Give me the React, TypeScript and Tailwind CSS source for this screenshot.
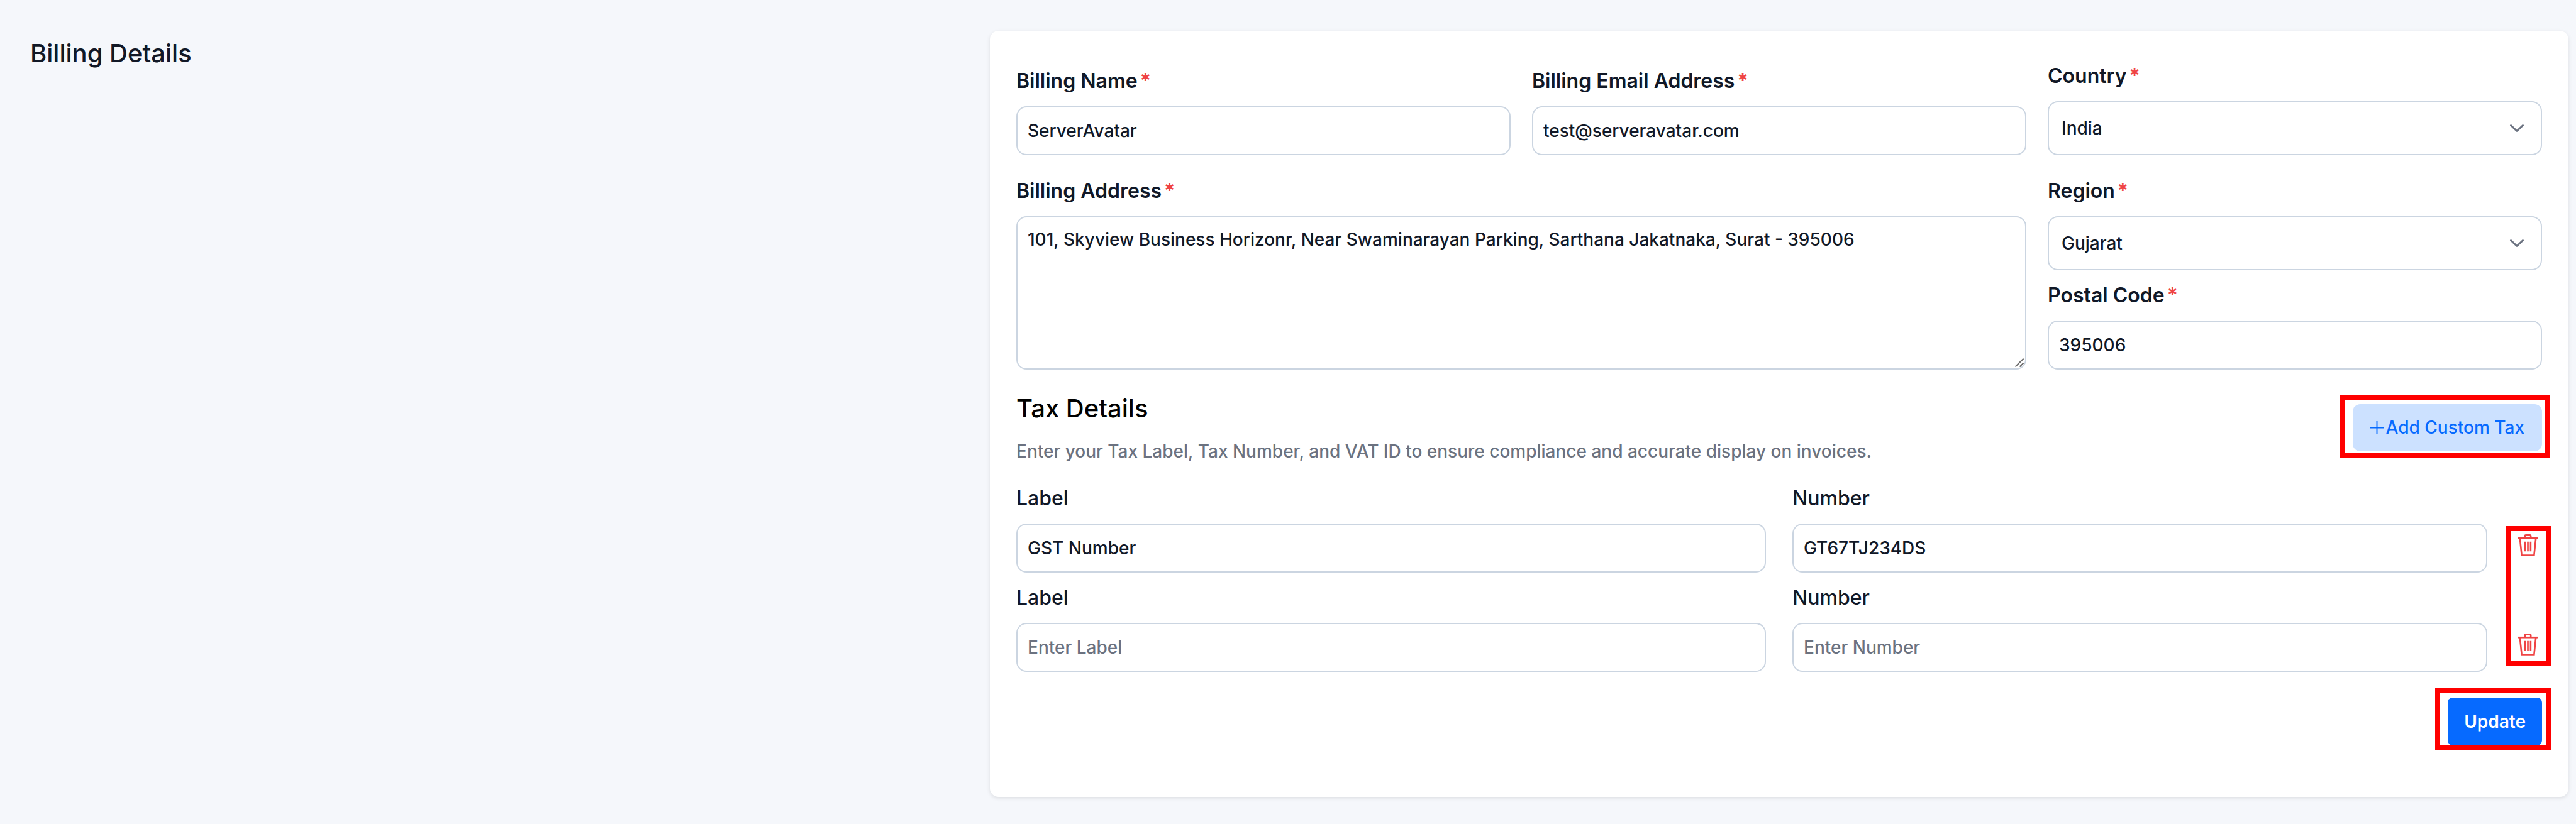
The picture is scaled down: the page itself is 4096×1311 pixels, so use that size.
import React, { useState } from 'react';

interface TaxRow {
  id: number;
  label: string;
  number: string;
}

const fieldClass =
  'block w-full rounded-[16px] border-2 border-[#cbd5e1] bg-white px-4 text-[28px] leading-[42px] font-medium text-[#111827] placeholder:text-[#6b7280] placeholder:opacity-100 focus:outline-none';

const TrashIcon: React.FC = () => (
  <svg viewBox="0 0 33 37" className="h-[35px] w-[31px]" fill="none" stroke="currentColor" strokeWidth="2.8">
    <path d="M0 6.5h33" />
    <path d="M11.5 6V3.2a1.8 1.8 0 0 1 1.8-1.8h6.4a1.8 1.8 0 0 1 1.8 1.8V6" />
    <path d="M3 7l3 28.5h21L30 7" />
    <path d="M11.8 12.5v16.5M16.5 12.5v16.5M21.2 12.5v16.5" />
  </svg>
);

const PlusIcon: React.FC = () => (
  <svg viewBox="0 0 22 22" className="h-[21px] w-[21px]" fill="none" stroke="currentColor" strokeWidth="2">
    <path d="M0 11h22M11 0v22" />
  </svg>
);

const Highlight: React.FC<{ className: string }> = ({ className }) => (
  <div className={`pointer-events-none absolute border-8 border-[#ff0000] ${className}`} />
);

const Label: React.FC<{ htmlFor: string; children: React.ReactNode }> = ({ htmlFor, children }) => (
  <label htmlFor={htmlFor} className="mb-5 flex gap-1 text-[32px] leading-10 font-semibold text-[#111827]">
    {children}
    <span className="text-[#ef4444]">*</span>
  </label>
);

interface SelectFieldProps {
  id: string;
  label: string;
  value: string;
  options: string[];
  onChange: (value: string) => void;
}

const SelectField: React.FC<SelectFieldProps> = ({ id, label, value, options, onChange }) => (
  <div>
    <Label htmlFor={id}>{label}</Label>
    <div className="relative">
      <select
        id={id}
        value={value}
        onChange={(e) => onChange(e.target.value)}
        className="block h-[86px] w-full appearance-none rounded-[16px] border-2 border-[#cbd5e1] bg-white px-5 text-[28px] leading-[42px] font-medium text-[#111827] focus:outline-none"
      >
        {options.map((option) => (
          <option key={option}>{option}</option>
        ))}
      </select>
      <svg
        viewBox="0 0 24 14"
        className="pointer-events-none absolute top-[36px] right-7 h-[14px] w-6"
        fill="none"
        stroke="#6b7280"
        strokeWidth="3"
        strokeLinecap="round"
        strokeLinejoin="round"
      >
        <path d="M2.5 2.5l9.5 9 9.5-9" />
      </svg>
    </div>
  </div>
);

export default function App() {
  const [name, setName] = useState('ServerAvatar');
  const [email, setEmail] = useState('test@serveravatar.com');
  const [country, setCountry] = useState('India');
  const [region, setRegion] = useState('Gujarat');
  const [postalCode, setPostalCode] = useState('395006');
  const [address, setAddress] = useState(
    '101, Skyview Business Horizonr, Near Swaminarayan Parking, Sarthana Jakatnaka, Surat - 395006'
  );
  const [taxes, setTaxes] = useState<TaxRow[]>([
    { id: 1, label: 'GST Number', number: 'GT67TJ234DS' },
    { id: 2, label: '', number: '' },
  ]);

  const updateTax = (id: number, patch: Partial<TaxRow>) =>
    setTaxes(taxes.map((tax) => (tax.id === id ? { ...tax, ...patch } : tax)));

  return (
    <div className="grid min-h-screen grid-cols-[781fr_1255fr] items-start bg-[#f5f7fb] px-3 pt-[49px] pb-11 font-['Inter',sans-serif]">
      <h2 className="pt-2 pl-9 text-[40px] leading-[56px] font-medium text-[#111827]">Billing Details</h2>

      <form
        onSubmit={(e) => e.preventDefault()}
        className="rounded-[14px] bg-white px-[42px] pt-[52px] pb-[82px] shadow-[0_2px_6px_rgba(0,0,0,0.1)]"
      >
        <div className="grid grid-cols-3 gap-x-[34px] gap-y-[37px]">
          <div className="self-end">
            <Label htmlFor="name">Billing Name</Label>
            <input id="name" value={name} onChange={(e) => setName(e.target.value)} className={`h-[78px] ${fieldClass}`} />
          </div>
          <div className="self-end">
            <Label htmlFor="email">Billing Email Address</Label>
            <input
              id="email"
              type="email"
              value={email}
              onChange={(e) => setEmail(e.target.value)}
              className={`h-[78px] ${fieldClass}`}
            />
          </div>
          <SelectField id="country" label="Country" value={country} options={['India']} onChange={setCountry} />

          <div className="col-span-2 flex flex-col">
            <Label htmlFor="address">Billing Address</Label>
            <div className="relative flex flex-1">
              <textarea
                id="address"
                value={address}
                onChange={(e) => setAddress(e.target.value)}
                className={`resize-none pt-[14px] ${fieldClass}`}
              />
              <svg
                viewBox="0 0 14 14"
                className="pointer-events-none absolute right-1 bottom-1 h-[14px] w-[14px]"
                fill="none"
                stroke="#6b6b6b"
                strokeWidth="2"
              >
                <path d="M0.5 13.5l13-13M7.5 13.5l6-6" />
              </svg>
            </div>
          </div>
          <div className="flex flex-col gap-5">
            <SelectField id="region" label="Region" value={region} options={['Gujarat']} onChange={setRegion} />
            <div>
              <Label htmlFor="postal">Postal Code</Label>
              <input
                id="postal"
                value={postalCode}
                onChange={(e) => setPostalCode(e.target.value)}
                className={`h-[78px] ${fieldClass}`}
              />
            </div>
          </div>
        </div>

        <div className="mt-[34px] flex items-center justify-between">
          <div>
            <h3 className="text-[40px] leading-[56px] font-medium text-black">Tax Details</h3>
            <p className="mt-5 text-[28px] leading-10 font-medium text-[#6b7280]">
              Enter your Tax Label, Tax Number, and VAT ID to ensure compliance and accurate display on invoices.
            </p>
          </div>
          <div className="relative">
            <button
              type="button"
              onClick={() => setTaxes([...taxes, { id: Date.now(), label: '', number: '' }])}
              className="flex h-[75px] items-center gap-1 rounded-[12px] bg-[#cce1ff] px-7 text-[28px] leading-10 font-medium text-[#066aff]"
            >
              <PlusIcon />
              Add Custom Tax
            </button>
            <Highlight className="-top-[15px] -right-3 -bottom-[10px] -left-5" />
          </div>
        </div>

        <div className="relative mt-[35px] flex flex-col gap-5">
          {taxes.map((tax) => (
            <div key={tax.id} className="grid grid-cols-2 gap-[42px]">
              <div>
                <label
                  htmlFor={`label-${tax.id}`}
                  className="mb-5 block text-[32px] leading-10 font-medium text-[#111827]"
                >
                  Label
                </label>
                <input
                  id={`label-${tax.id}`}
                  value={tax.label}
                  placeholder="Enter Label"
                  onChange={(e) => updateTax(tax.id, { label: e.target.value })}
                  className={`h-[78px] ${fieldClass}`}
                />
              </div>
              <div className="flex items-end">
                <div className="flex-1">
                  <label
                    htmlFor={`number-${tax.id}`}
                    className="mb-5 block text-[32px] leading-10 font-medium text-[#111827]"
                  >
                    Number
                  </label>
                  <input
                    id={`number-${tax.id}`}
                    value={tax.number}
                    placeholder="Enter Number"
                    onChange={(e) => updateTax(tax.id, { number: e.target.value })}
                    className={`h-[78px] ${fieldClass}`}
                  />
                </div>
                <button
                  type="button"
                  aria-label="Delete tax"
                  onClick={() => setTaxes(taxes.filter((t) => t.id !== tax.id))}
                  className="mb-[26px] pr-[7px] pl-[49px] text-[#ef4444]"
                >
                  <TrashIcon />
                </button>
              </div>
            </div>
          ))}
          <Highlight className="top-16 -right-[15px] bottom-[10px] w-[72px]" />
        </div>

        <div className="mt-[41px] flex justify-end">
          <div className="relative">
            <button
              type="submit"
              className="block h-[76px] rounded-lg bg-[#066aff] px-[26px] text-[28px] leading-10 font-semibold text-white"
            >
              Update
            </button>
            <Highlight className="-top-4 -right-[15px] -bottom-2 -left-5" />
          </div>
        </div>
      </form>
    </div>
  );
}
